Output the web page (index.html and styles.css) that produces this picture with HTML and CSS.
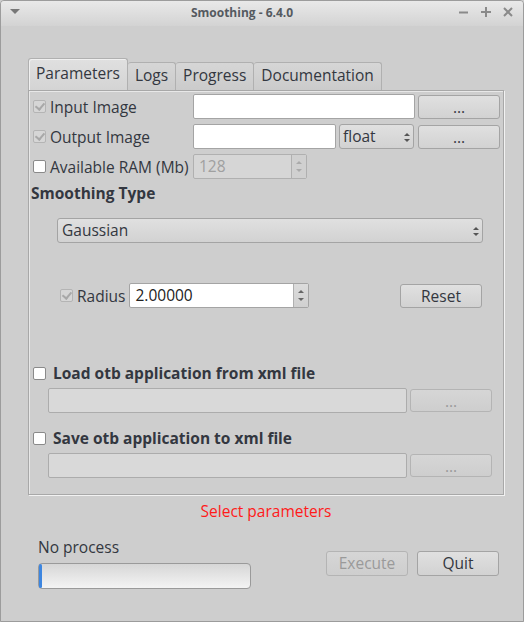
FILE: index.html
```html
<!DOCTYPE html>
<html>
<head>
<meta charset="utf-8">
<link rel="stylesheet" href="styles.css">
</head>
<body>
<div class="window">
  <div class="titlebar">
    <span class="menu-arrow"></span>
    <span class="title">Smoothing - 6.4.0</span>
    <span class="wbtns">
      <svg width="12" height="12" viewBox="0 0 12 12"><path d="M1 6.5H10" stroke="#8a8a8a" stroke-width="2"/></svg>
      <svg width="12" height="12" viewBox="0 0 12 12"><path d="M1 6H11M6 1V11" stroke="#8a8a8a" stroke-width="2"/></svg>
      <svg width="12" height="12" viewBox="0 0 12 12"><path d="M2 2L10 10M10 2L2 10" stroke="#8a8a8a" stroke-width="2"/></svg>
    </span>
  </div>
  <div class="content">
    <div class="tabs">
      <div class="tab active">Parameters</div>
      <div class="tab">Logs</div>
      <div class="tab">Progress</div>
      <div class="tab">Documentation</div>
    </div>
    <div class="panel">
      <div class="row">
        <label class="lbl"><span class="cb checked dis"></span>Input Image</label>
        <div class="field w222"></div>
        <div class="btn w82">...</div>
      </div>
      <div class="row">
        <label class="lbl"><span class="cb checked dis"></span>Output Image</label>
        <div class="field w143"></div>
        <div class="combo w75">float<span class="updown"></span></div>
        <div class="btn w82 ml1">...</div>
      </div>
      <div class="row">
        <label class="lbl"><span class="cb"></span>Available RAM (Mb)</label>
        <div class="spin dis w114"><span class="val">128</span><span class="spinbtns"><i class="up"></i><i class="down"></i></span></div>
      </div>
      <div class="section">Smoothing Type</div>
      <div class="combo big">Gaussian<span class="updown"></span></div>
      <div class="radius-row">
        <label class="lbl2"><span class="cb checked dis"></span>Radius</label>
        <div class="spin w180"><span class="val dark">2.00000</span><span class="spinbtns"><i class="up"></i><i class="down"></i></span></div>
        <div class="spacer"></div>
        <div class="btn w82">Reset</div>
      </div>
      <div class="xml first">
        <label class="xlbl"><span class="cb"></span>Load otb application from xml file</label>
        <div class="xrow">
          <div class="field dis w358"></div>
          <div class="btn dis w82">...</div>
        </div>
      </div>
      <div class="xml">
        <label class="xlbl"><span class="cb"></span>Save otb application to xml file</label>
        <div class="xrow">
          <div class="field dis w358"></div>
          <div class="btn dis w82">...</div>
        </div>
      </div>
    </div>
    <div class="status">Select parameters</div>
    <div class="bottom">
      <div class="proc">
        <div class="proc-label">No process</div>
        <div class="progress"><span class="chunk"></span></div>
      </div>
      <div class="actions">
        <div class="btn dis w82">Execute</div>
        <div class="btn w82">Quit</div>
      </div>
    </div>
  </div>
</div>
</body>
</html>
```

FILE: styles.css
```css
html, body {
  margin: 0;
  padding: 0;
  background: #cecece;
}
body {
  font-family: "Open Sans", "Noto Sans", sans-serif;
  font-size: 15.5px;
  color: #333740;
}
.window {
  width: 524px;
  height: 622px;
  box-sizing: border-box;
  border: 1px solid #9c9c9c;
  border-radius: 4px 4px 0 0;
  background: #cecece;
  overflow: hidden;
}
.titlebar {
  height: 25px;
  background: linear-gradient(#e9e9e9, #d3d3d3);
  display: flex;
  align-items: center;
}
.menu-arrow {
  width: 0;
  height: 0;
  border-left: 5px solid transparent;
  border-right: 5px solid transparent;
  border-top: 5px solid #777;
  margin-left: 9px;
  margin-top: -4px;
}
.title {
  flex: 1;
  text-align: center;
  font-size: 12px;
  font-weight: bold;
  color: #555a60;
  margin-left: 6px;
  margin-top: -3px;
}
.wbtns {
  display: flex;
  gap: 10px;
  margin-right: 9px;
  margin-top: -3px;
}
.content {
  padding: 32px 0 0 27px;
}
.tabs {
  display: flex;
  height: 32px;
  align-items: flex-end;
}
.tab {
  height: 28px;
  box-sizing: border-box;
  border: 1px solid #b0b0b0;
  border-bottom: none;
  border-left: none;
  padding: 0 7px;
  line-height: 24px;
  background: linear-gradient(#d6d6d6, #cbcbcb);
  border-radius: 3px 3px 0 0;
}
.tab.active {
  height: 32px;
  line-height: 29px;
  border-left: 1px solid #b0b0b0;
  padding: 0 7px;
  background: linear-gradient(#e0e0e0, #d4d4d4);
  box-shadow: inset 1px 1px 0 #f0f0f0;
}
.panel {
  width: 476px;
  height: 405px;
  box-sizing: border-box;
  border: 1px solid #a8a8a8;
  box-shadow: inset 1px 1px 0 #e8e8e8, 1px 1px 0 #f2f2f2;
  padding: 3px 0 0 4px;
}
.row {
  display: flex;
  align-items: center;
  height: 25px;
  margin-bottom: 5px;
  gap: 3px;
}
.lbl {
  width: 157px;
  display: flex;
  align-items: center;
  white-space: nowrap;
}
.cb {
  display: inline-block;
  width: 13px;
  height: 13px;
  box-sizing: border-box;
  border: 1px solid #8a8a8a;
  border-radius: 2px;
  background: #fff;
  margin-right: 4px;
  position: relative;
  flex: none;
}
.cb.dis {
  border-color: #b4b4b4;
  background: #d6d6d6;
}
.cb.checked::after {
  content: "";
  position: absolute;
  left: 3px;
  top: 0px;
  width: 4px;
  height: 7px;
  border: solid #a8a8a8;
  border-width: 0 2px 2px 0;
  transform: rotate(40deg);
}
.field {
  height: 25px;
  box-sizing: border-box;
  border: 1px solid #a4a4a4;
  border-radius: 2px;
  background: #fff;
}
.field.dis {
  background: #d9d9d9;
  border-color: #acacac;
}
.w222 { width: 222px; }
.w143 { width: 143px; }
.w75 { width: 75px; }
.w82 { width: 82px; }
.w114 { width: 114px; }
.w180 { width: 180px; }
.w358 { width: 359px; }
.ml1 { margin-left: 1px; }
.btn {
  height: 24px;
  box-sizing: border-box;
  border: 1px solid #a4a4a4;
  border-radius: 3px;
  background: linear-gradient(#e0e0e0, #d2d2d2);
  text-align: center;
  line-height: 22px;
  color: #333740;
  flex: none;
}
.btn.dis {
  color: #9a9a9a;
  border-color: #b4b4b4;
  background: linear-gradient(#d6d6d6, #cecece);
}
.combo {
  height: 25px;
  box-sizing: border-box;
  border: 1px solid #a4a4a4;
  border-radius: 3px;
  background: linear-gradient(#e0e0e0, #d2d2d2);
  line-height: 23px;
  padding-left: 3px;
  position: relative;
}
.updown {
  position: absolute;
  right: 6px;
  top: 8px;
  width: 0;
  height: 0;
}
.updown::before, .updown::after {
  content: "";
  position: absolute;
  left: -3px;
  border-left: 3px solid transparent;
  border-right: 3px solid transparent;
}
.updown::before {
  top: 0;
  border-bottom: 3px solid #555;
}
.updown::after {
  top: 6px;
  border-top: 3px solid #555;
}
.spin {
  height: 25px;
  box-sizing: border-box;
  border: 1px solid #a4a4a4;
  border-radius: 2px;
  background: #fff;
  display: flex;
}
.spin.dis {
  background: #d6d6d6;
  border-color: #b0b0b0;
}
.spin .val {
  flex: 1;
  padding-left: 5px;
  line-height: 23px;
  color: #a0a0a0;
}
.spin .val.dark { color: #222; }
.spinbtns {
  width: 14px;
  border-left: 1px solid #b0b0b0;
  background: linear-gradient(#dcdcdc, #d0d0d0);
  position: relative;
}
.spin.dis .spinbtns { background: #d0d0d0; }
.spinbtns i {
  position: absolute;
  left: 4px;
  border-left: 3px solid transparent;
  border-right: 3px solid transparent;
}
.spinbtns .up { top: 6px; border-bottom: 3px solid #666; }
.spinbtns .down { top: 14px; border-top: 3px solid #666; }
.spin.dis .spinbtns .up { border-bottom-color: #aaa; }
.spin.dis .spinbtns .down { border-top-color: #aaa; }
.section {
  font-weight: bold;
  margin: 0 0 0 -2px;
  height: 20px;
  line-height: 18px;
}
.combo.big {
  width: 426px;
  margin: 14px 0 0 24px;
  padding-left: 4px;
}
.radius-row {
  display: flex;
  align-items: center;
  height: 25px;
  margin: 40px 0 0 27px;
  width: 422px;
}
.lbl2 {
  display: flex;
  align-items: center;
  margin-right: 4px;
}
.spacer { flex: 1; }
.xml.first { margin-top: 55px; }
.xml { margin-bottom: 15px; }
.xlbl {
  display: flex;
  align-items: center;
  font-weight: bold;
  height: 20px;
}
.xlbl .cb { margin-right: 7px; }
.xrow {
  display: flex;
  align-items: center;
  margin: 5px 0 0 15px;
  gap: 3px;
}
.xrow .btn { height: 23px; }
.status {
  width: 476px;
  text-align: center;
  color: #ff1a1a;
  margin-top: 6px;
  height: 22px;
  line-height: 20px;
}
.bottom {
  display: flex;
  margin-top: 16px;
  padding-left: 10px;
  width: 461px;
}
.proc-label {
  height: 24px;
  line-height: 16px;
}
.progress {
  width: 213px;
  height: 26px;
  box-sizing: border-box;
  border: 1px solid #9a9a9a;
  border-radius: 4px;
  background: linear-gradient(#d6d6d6, #f4f4f4);
  position: relative;
}
.chunk {
  position: absolute;
  left: 0;
  top: 0;
  bottom: 0;
  width: 3px;
  background: #3d86e0;
  border-radius: 2px;
}
.actions {
  display: flex;
  gap: 9px;
  margin-left: auto;
  margin-top: 12px;
}
.actions .btn { height: 25px; line-height: 23px; }
```
